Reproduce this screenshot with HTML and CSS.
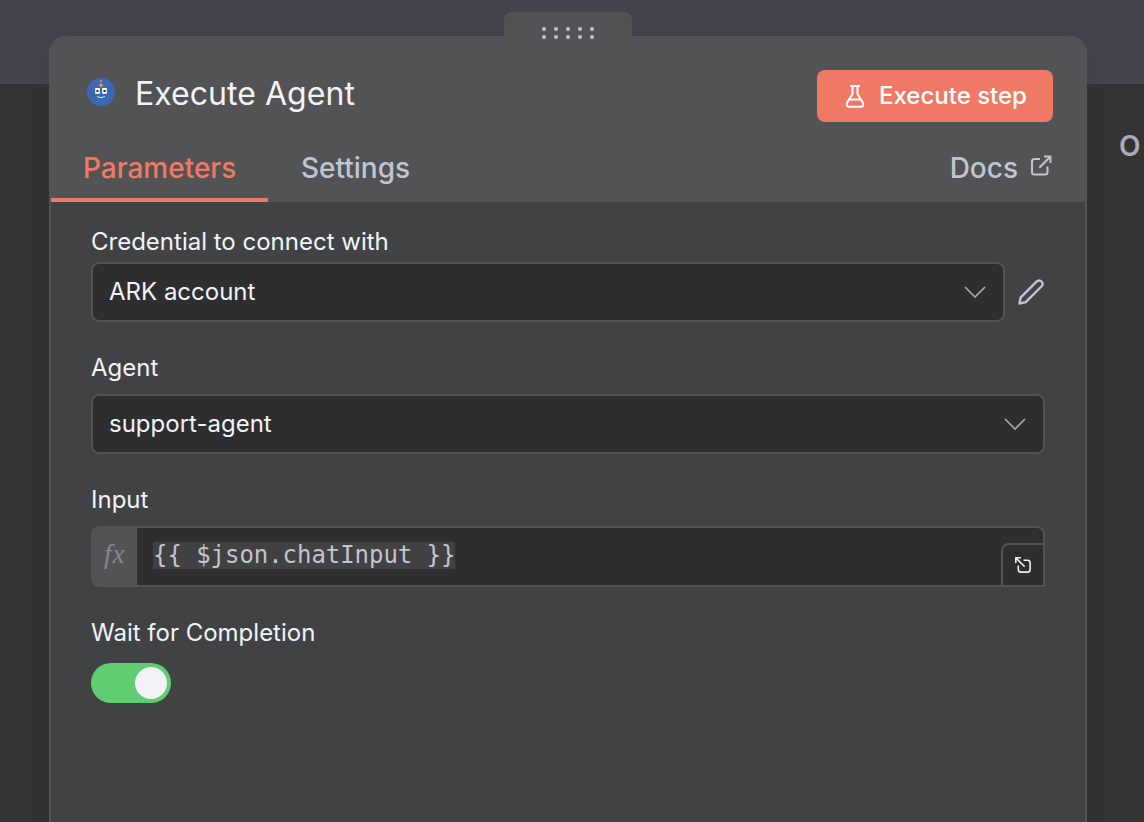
FILE: index.html
```html
<!DOCTYPE html>
<html lang="en">
<head>
<meta charset="utf-8">
<title>Execute Agent</title>
<link rel="stylesheet" href="styles.css">
</head>
<body>
<div class="backdrop"><span class="output-title">O</span></div>
<main class="panel">
  <div class="drag-handle">
    <i></i><i></i><i></i><i></i><i></i><i></i><i></i><i></i><i></i><i></i>
  </div>
  <header class="header">
    <div class="title-row">
      <svg class="node-icon" width="28" height="28" viewBox="0 0 28 28">
        <circle cx="14" cy="14" r="14" fill="#3b68ae"/>
        <path d="M14 2v5" stroke="#8a8078" stroke-width="1.2"/>
        <rect x="13.2" y="2" width="1.6" height="1.6" fill="#d99a4e"/>
        <rect x="12.6" y="6" width="3" height="2.6" fill="#f0a23c"/>
        <rect x="8.200" y="10" width="4.600" height="5.800" fill="#fff"/>
        <rect x="15.200" y="10" width="4.600" height="5.800" fill="#fff"/>
        <rect x="9.400" y="12" width="2" height="2" fill="#222"/>
        <rect x="16.600" y="12" width="2" height="2" fill="#222"/>
        <path d="M10 18.600q4 2 8 0" fill="none" stroke="#dfe7f3" stroke-width="1"/>
      </svg>
      <h1 class="title">Execute Agent</h1>
      <button class="execute">
        <svg width="20" height="24" viewBox="0 0 20 24" fill="none" stroke="#fff" stroke-width="2" stroke-linejoin="round">
          <path d="M5 2h10M7.500 2v8L2.200 18.600Q.800 22.500 4 22.800h12q3.200-.3 1.800-4.200L12.500 10V2M4.200 15.500h11.600"/>
        </svg>
        <span class="execute-label">Execute step</span>
      </button>
    </div>
    <nav class="tabs">
      <a class="tab tab-active">Parameters</a>
      <a class="tab tab-settings">Settings</a>
      <a class="tab tab-docs">Docs
        <svg width="22" height="22" viewBox="0 0 22 22" fill="none" stroke="#c1c4d1" stroke-width="2" stroke-linejoin="round">
          <path d="M10 4H4.500A2.500 2.500 0 0 0 2 6.500V17A2.500 2.500 0 0 0 4.500 19.500h10.500a2.500 2.500 0 0 0 2.500-2.500V11.500M14 1.500h6.500V8M20.200 1.800L9.300 12.700"/>
        </svg>
      </a>
    </nav>
  </header>
  <section class="form">
    <div class="field">
      <label class="label">Credential to connect with</label>
      <div class="credential-row">
        <div class="select"><span>ARK account</span>
          <svg width="22" height="12" viewBox="0 0 22 12" fill="none" stroke="#a9acb8" stroke-width="1.600"><path d="M1 1l10 10L21 1"/></svg>
        </div>
        <svg class="pencil" width="26" height="26" viewBox="0 0 26 26" fill="none" stroke="#c1c4d1" stroke-width="2.400" stroke-linejoin="round">
          <path d="M1.500 24.500L2.600 18.600L18.500 2.700C22 -.500 27 4 23.400 7.500L7.700 23.200Z"/>
        </svg>
      </div>
    </div>
    <div class="field field-agent">
      <label class="label">Agent</label>
      <div class="select"><span>support-agent</span>
        <svg width="22" height="12" viewBox="0 0 22 12" fill="none" stroke="#a9acb8" stroke-width="1.600"><path d="M1 1l10 10L21 1"/></svg>
      </div>
    </div>
    <div class="field field-input">
      <label class="label">Input</label>
      <div class="expression">
        <span class="fx">fx</span>
        <div class="editor"><code class="code">{{ $json.chatInput }}</code></div>
        <span class="expand">
          <svg width="16" height="16" viewBox="0 0 16 16" fill="none" stroke="#edeff5" stroke-width="1.600" stroke-linejoin="round">
            <path d="M.800 6V.800H6M1 1l8.700 8.700M8.500 3.300H12.500q2.600 0 2.600 2.600V12.500q0 2.600-2.600 2.600H5.900q-2.600 0-2.600-2.600V8.500"/>
          </svg>
        </span>
      </div>
    </div>
    <div class="field field-wait">
      <label class="label">Wait for Completion</label>
      <div class="toggle"><span class="knob"></span></div>
    </div>
  </section>
</main>
</body>
</html>
```
FILE: styles.css
```css
* { box-sizing: border-box; }
body {
  margin: 0;
  height: 822px;
  overflow: hidden;
  position: relative;
  background: #333333;
  font-family: Inter, "Liberation Sans", sans-serif;
  color: #f1f3f9;
}
.backdrop {
  position: absolute;
  inset: 0;
  border-top: 84px solid #46434e;
}
.output-title {
  position: absolute;
  left: 1119px;
  top: 44px;
  font-size: 28px;
  line-height: 36px;
  font-weight: 600;
  color: #a9acb8;
}
.panel {
  position: relative;
  width: 1038px;
  height: 800px;
  margin: 36px 0 0 49px;
  border: 2px solid #525355;
  border-radius: 16px 16px 0 0;
  background: #414244;
  box-shadow: 0 0 16px rgba(52, 52, 60, .15);
}
.drag-handle {
  position: absolute;
  left: 453px;
  top: -26px;
  width: 128px;
  height: 28px;
  padding: 15px 38px 0;
  border-radius: 8px 8px 0 0;
  background: #525355;
  display: grid;
  grid-template-columns: repeat(5, 4px);
  grid-auto-rows: 4px;
  gap: 4px 8px;
}
.drag-handle i { border-radius: 50%; background: #c1c4d1; }
.header {
  height: 164px;
  background: #525355;
  border-radius: 14px 14px 0 0;
  display: flex;
  flex-direction: column;
  justify-content: space-between;
}
.title-row {
  display: flex;
  align-items: center;
  padding: 32px 32px 0 36px;
}
.node-icon { margin-bottom: 8px; }
.title {
  flex: 1;
  margin: 0 0 4px 20px;
  font-size: 32px;
  line-height: 40px;
  font-weight: 420;
  letter-spacing: .04px;
}
.execute {
  width: 236px;
  height: 52px;
  border: 0;
  border-radius: 8px;
  padding: 0 0 0 28px;
  background: #f07966;
  color: #fff;
  display: flex;
  align-items: center;
  gap: 14px;
  font: 500 24px/30px Inter, sans-serif;
}
.tabs { display: flex; height: 68px; }
.tab {
  padding: 14px 32px 0;
  font-size: 28px;
  line-height: 41px;
  font-weight: 500;
  color: #c1c4d1;
}
.tab-active {
  width: 217px;
  color: #f07966;
  border-bottom: 4px solid #f07966;
}
.tab-settings { padding-left: 33px; }
.tab-docs {
  margin-left: auto;
  padding-right: 33px;
  display: flex;
  gap: 12px;
}
.tab-docs svg { margin-top: 7px; }
.form { padding: 24px 40px; }
.label {
  display: block;
  font-size: 24px;
  line-height: 32px;
}
.credential-row { display: flex; gap: 13px; align-items: center; margin-top: 4px; }
.credential-row .select { width: 914px; margin: 0; }
.select {
  height: 60px;
  margin-top: 10px;
  padding: 0 17px 2px 16px;
  border: 2px solid #525355;
  border-radius: 8px;
  background: #2e2e2e;
  display: flex;
  align-items: center;
  justify-content: space-between;
  font-size: 24px;
}
.select svg { margin-top: 2px; }
.field-agent { margin-top: 30px; }
.field-input { margin-top: 30px; }
.field-wait { margin-top: 30px; }
.expression {
  position: relative;
  display: flex;
  height: 61px;
  margin-top: 10px;
}
.fx {
  width: 46px;
  padding: 12px 0 0 13px;
  border-radius: 8px 0 0 8px;
  background: #525355;
  color: #858894;
  font: italic 27px/32px "Liberation Serif", serif;
  letter-spacing: 1px;
}
.editor {
  flex: 1;
  padding: 12px 16px;
  border: 2px solid #525355;
  border-left: 0;
  border-radius: 0 8px 0 0;
  background: #2e2e2e;
}
.code {
  display: inline-block;
  height: 27px;
  margin-top: 2px;
  background: #414141;
  color: #c1c4d1;
  font: 24px/27px "DejaVu Sans Mono", monospace;
  letter-spacing: -.05px;
  white-space: pre;
}
.expand {
  position: absolute;
  right: 0;
  bottom: 0;
  width: 44px;
  height: 44px;
  border: 2px solid #525355;
  border-radius: 8px 0 0 0;
  display: flex;
  align-items: center;
  justify-content: center;
}
.toggle {
  width: 80px;
  height: 40px;
  margin-top: 14px;
  padding: 4px;
  border-radius: 20px;
  background: #60cd72;
  display: flex;
  justify-content: flex-end;
}
.knob { width: 32px; height: 32px; border-radius: 50%; background: #f1f3f9; }
```
